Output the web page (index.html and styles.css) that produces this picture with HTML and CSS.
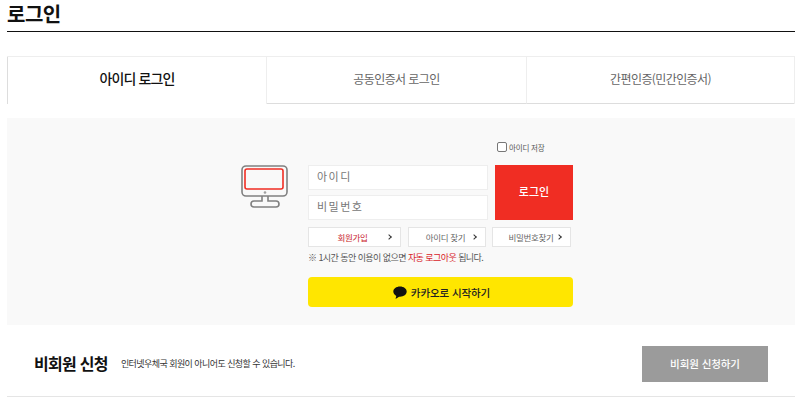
FILE: index.html
```html
<!DOCTYPE html>
<html lang="ko">

<head>
    <meta charset="UTF-8">
    <meta name="viewport" content="width=device-width, initial-scale=1.0">
    <title>로그인</title>
    <link rel="stylesheet" href="styles.css">
</head>

<body>
    <div class="wrap">
        <h1 class="page-title">로그인</h1>

        <!-- 탭 -->
        <ul class="tabs">
            <li class="tab active">아이디 로그인</li>
            <li class="tab">공동인증서 로그인</li>
            <li class="tab">간편인증(민간인증서)</li>
        </ul>

        <!-- 로그인 박스 -->
        <div class="login-box">
            <svg class="pc-icon" width="48" height="44" viewBox="0 0 48 44" fill="none">
                <rect x="1" y="1" width="45" height="30" rx="4" stroke="#808080" stroke-width="1.6" />
                <rect x="4" y="4" width="38" height="20" rx="2" stroke="#f02d23" stroke-width="1.6" />
                <circle cx="24" cy="27.5" r="1.3" fill="#a0a0a0" />
                <path d="M21 31v5h-8a2.500 2.500 0 0 0 0 6h22a2.500 2.500 0 0 0 0-6h-8v-5" stroke="#808080" stroke-width="1.6" />
            </svg>

            <div class="login-form">
                <label class="save-id"><span class="check"></span>아이디 저장</label>
                <div class="form-row">
                    <div class="inputs">
                        <div class="input">아이디</div>
                        <div class="input">비밀번호</div>
                    </div>
                    <button type="button" class="btn-login">로그인</button>
                </div>
                <div class="links">
                    <a class="link join">회원가입<i class="arrow"></i></a>
                    <a class="link find-id">아이디 찾기<i class="arrow"></i></a>
                    <a class="link find-pw">비밀번호찾기<i class="arrow"></i></a>
                </div>
                <p class="notice">※ 1시간 동안 이용이 없으면 <em>자동 로그아웃</em> 됩니다.</p>
                <button type="button" class="btn-kakao">
                    <svg width="14" height="13" viewBox="0 0 14 13">
                        <path d="M7 .5C3.300.5.300 2.800.300 5.600c0 1.800 1.200 3.400 3 4.300l-.700 2.700c0 .200.100.300.300.200l3.200-2.100c.300 0 .600.100.900.100 3.700 0 6.700-2.300 6.700-5.200S10.700.500 7 .500z" fill="#111" />
                    </svg>
                    카카오로 시작하기
                </button>
            </div>
        </div>

        <!-- 비회원 신청 -->
        <div class="guest">
            <strong class="guest-title">비회원 신청</strong>
            <span class="guest-desc">인터넷우체국 회원이 아니어도 신청할 수 있습니다.</span>
            <button type="button" class="btn-guest">비회원 신청하기</button>
        </div>
    </div>
</body>

</html>
```

FILE: styles.css
```css
/* 기본 */

body {
    margin: 0;
    background: #fff;
    color: #222;
    font-family: "Noto Sans CJK KR", "Noto Sans", sans-serif;
    overflow: hidden;
}

button {
    font-family: inherit;
    border: none;
    cursor: pointer;
}

.wrap {
    width: 788px;
    margin-left: 7px;
}

.page-title {
    margin: 0;
    height: 31px;
    border-bottom: 1px solid #111;
    font-size: 20px;
    line-height: 28px;
    font-weight: 700;
    color: #111;
    letter-spacing: -0.5px;
}

/* 탭 */

.tabs {
    display: flex;
    list-style: none;
    margin: 24px 0 14px;
    padding: 0;
    height: 47px;
    border-top: 1px solid #eee;
    border-right: 1px solid #eee;
}

.tab {
    flex: 260px 0 0;
    text-align: center;
    font-size: 12px;
    line-height: 44px;
    color: #666;
    border-right: 1px solid #eee;
    border-bottom: 1px solid #ddd;
    box-sizing: border-box;
    letter-spacing: -0.6px;
}

.tab:last-child {
    flex: 1;
    border-right: none;
}

.tab.active {
    font-size: 14px;
    font-weight: 500;
    line-height: 43px;
    color: #111;
    border-left: 1px solid #ddd;
    border-bottom: none;
    letter-spacing: -0.9px;
}

/* 로그인 박스 */

.login-box {
    display: flex;
    align-items: flex-start;
    height: 207px;
    box-sizing: border-box;
    padding: 47px 0 0 234px;
    background: #f9f9f9;
}

.pc-icon {
    flex: none;
    margin-right: 19px;
}

.login-form {
    width: 265px;
    margin-top: -24px;
}

.save-id {
    display: flex;
    align-items: center;
    height: 12px;
    margin: 0 0 12px 189px;
    font-size: 7.500px;
    letter-spacing: -0.2px;
    color: #555;
    white-space: nowrap;
}

.check {
    width: 8px;
    height: 8px;
    margin-right: 2px;
    border: 1px solid #777;
    border-radius: 2px;
    background: #fff;
}

.form-row {
    display: flex;
    justify-content: space-between;
    height: 55px;
}

.inputs {
    display: flex;
    flex-direction: column;
    justify-content: space-between;
    width: 180px;
}

.input {
    height: 25px;
    box-sizing: border-box;
    padding-left: 8px;
    background: #fff;
    border: 1px solid #eee;
    font-size: 11px;
    line-height: 21px;
    letter-spacing: 1.5px;
    color: #777;
}

.btn-login {
    width: 78px;
    padding: 0 0 3px;
    background: #f02d23;
    color: #fff;
    font-size: 11px;
    font-weight: 500;
}

.links {
    display: flex;
    margin-top: 7px;
}

.link {
    display: flex;
    align-items: center;
    justify-content: center;
    position: relative;
    height: 20px;
    box-sizing: border-box;
    background: #fff;
    border: 1px solid #e5e5e5;
    font-size: 8.500px;
    letter-spacing: -0.3px;
    color: #666;
    white-space: nowrap;
}

.join {
    width: 93px;
    margin-right: 7px;
    padding-right: 4px;
    color: #c9252d;
}

.find-id {
    width: 78px;
    margin-right: 6px;
    padding-right: 3px;
}

.find-pw {
    width: 79px;
    padding-right: 1px;
}

.arrow {
    position: absolute;
    right: 9px;
    top: 7px;
    width: 3px;
    height: 3px;
    border-top: 1.500px solid #333;
    border-right: 1.500px solid #333;
    transform: rotate(45deg);
}

.notice {
    margin: 2px 0 0;
    height: 18px;
    font-size: 9px;
    letter-spacing: -0.56px;
    line-height: 17px;
    color: #555;
    white-space: nowrap;
}

.notice em {
    font-style: normal;
    color: #d8232a;
}

.btn-kakao {
    display: flex;
    align-items: center;
    justify-content: center;
    gap: 4px;
    width: 265px;
    height: 30px;
    margin-top: 10px;
    padding: 0 0 0 2px;
    border-radius: 4px;
    background: #ffe600;
    color: #222;
    font-size: 10.500px;
    font-weight: 500;
    letter-spacing: -0.1px;
}

/* 비회원 신청 */

.guest {
    display: flex;
    align-items: center;
    height: 72px;
    box-sizing: border-box;
    padding: 21px 27px 14px;
    border-bottom: 1px solid #e5e5e5;
}

.guest-title {
    font-size: 16px;
    font-weight: 700;
    color: #111;
    margin: 0 13px 3px 0;
    letter-spacing: -0.7px;
}

.guest-desc {
    margin-bottom: 1px;
    font-size: 9px;
    letter-spacing: -0.56px;
    color: #333;
}

.btn-guest {
    width: 126px;
    height: 36px;
    margin-left: auto;
    padding: 0 0 2px;
    background: #9b9b9b;
    color: #fff;
    font-size: 10.500px;
    font-weight: 500;
    letter-spacing: -0.1px;
}
```
